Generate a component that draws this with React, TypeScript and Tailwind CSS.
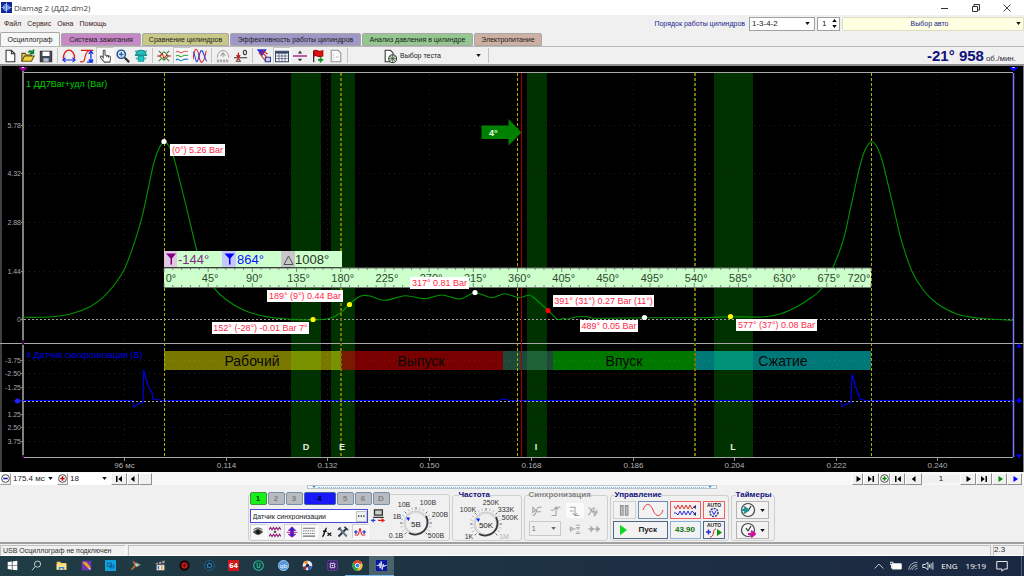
import type { ReactNode } from 'react';

type Pt = [number, number];

const pressureCurve: Pt[] = [
  [23, 317.3], [40, 317.3], [53, 316.8], [72, 313.5], [90, 306.7], [103, 297.3], [115, 284], [124.3, 269.3],
  [133, 246.7], [141.7, 218.3], [148.3, 188.3], [153.3, 165], [158.3, 150], [164, 141.7], [169.3, 146.7],
  [174, 158.3], [180, 181.7], [186.7, 208.3], [196.7, 250], [205, 273], [214.3, 288.3], [226.7, 300],
  [243.3, 310], [263.3, 316], [286.7, 319], [313, 320], [330, 318.3], [340, 313.3], [349.3, 304.3],
  [355, 299.5], [361.7, 295.7], [370, 296], [385, 300.3], [405, 295.7], [425, 298.7], [441.7, 295],
  [460, 299], [475, 292.7], [491.7, 297.7], [505, 293.7], [518.3, 297.7], [528.3, 295.3], [533.3, 297.3],
  [548.3, 310.7], [557.3, 319.3], [563.3, 318.3], [568.3, 319], [576.7, 316.7], [587, 316.7], [597, 318.3],
  [645, 317.7], [700, 317.7], [730, 316.7], [761.7, 317], [780, 314], [796.7, 306.7], [811.7, 297.3],
  [821.7, 288.3], [833.3, 266.7], [843.3, 240], [849.5, 213], [856, 183], [861, 162], [866, 148],
  [871.7, 141.7], [877, 147], [882, 160], [888, 184], [895, 214], [901.3, 240], [911.7, 270.7],
  [923.3, 290], [936.7, 303.3], [956.7, 314], [980, 318.3], [1013, 320.3],
];

const syncCurve =
  '23,400.5 133,400.5 134,407 136,405.5 139,403.5 143,402.5 143.7,370 147,382 149,388 152,393 153,399 163,400.5 498,400.5 503,399 510,400.5 841,400.5 842,406.5 845,404.5 851,402.5 852,374 855,385 858,393 860,399 866,400.5 1013,400.5';

function smooth(p: Pt[]) {
  let d = `M${p[0][0]} ${p[0][1]}`;
  for (let i = 0; i < p.length - 1; i++) {
    const a = p[Math.max(i - 1, 0)];
    const b = p[i];
    const c = p[i + 1];
    const e = p[Math.min(i + 2, p.length - 1)];
    d += `C${b[0] + (c[0] - a[0]) / 6} ${b[1] + (c[1] - a[1]) / 6} ${c[0] - (e[0] - b[0]) / 6} ${c[1] - (e[1] - b[1]) / 6} ${c[0]} ${c[1]}`;
  }
  return d;
}

const timeTicks: [number, string][] = [
  [124.5, '96 мс'], [226.5, '0.114'], [327.5, '0.132'], [429.5, '0.150'], [531.5, '0.168'],
  [633.5, '0.186'], [734.5, '0.204'], [836.5, '0.222'], [937.5, '0.240'],
];
const barTicks: [number, string][] = [[125.5, '5.78'], [173.5, '4.32'], [222.5, '2.88'], [271.5, '1.44'], [319.5, '0']];
const voltTicks: [number, string][] = [
  [360.5, '-3.75'], [373.5, '-2.50'], [387.5, '-1.25'], [414.5, '1.25'], [427.5, '2.50'], [441.5, '3.75'],
];
const bands: [number, number, string, number][] = [
  [291, 30, 'D', 306], [331, 24, 'E', 342], [527, 20, 'I', 536], [714, 39, 'L', 733],
];
const strokes: [number, number, string, string, number][] = [
  [164, 177, '#ffff00', 'Рабочий', 252], [341, 162, '#ff0000', 'Выпуск', 421], [503, 50, '#409878', '', 0],
  [553, 142, '#00ff00', 'Впуск', 624], [695, 176, '#00ffff', 'Сжатие', 783],
];
const callouts: [number, number, number, string][] = [
  [170, 144, 55, '(0°) 5.26 Bar'], [267, 290, 76, '189° (9°) 0.44 Bar'], [212, 322, 97, '152° (-28°) -0.01 Bar 7°'],
  [410, 277, 59, '317° 0.81 Bar'], [553, 295, 101, '391° (31°) 0.27 Bar (11°)'], [580, 320, 58, '489° 0.05 Bar'],
  [736, 319, 81, '577° (37°) 0.08 Bar'],
];
const markers: [number, number, string][] = [
  [164, 141.5, '#fff'], [313, 319.5, '#ff0'], [349.5, 304.5, '#ff0'], [475, 292.5, '#fff'],
  [548, 310.5, '#f00'], [644.5, 317.5, '#fff'], [730.5, 316.5, '#ff0'],
];

function Scope() {
  const deg = Array.from({ length: 81 }, (_, i) => i * 9);
  return (
    <svg viewBox="0 66 1024 406" className="block h-auto w-full bg-black" fontFamily="'Liberation Sans', Arial, sans-serif" role="img" aria-label="Осциллограмма">
      <path d="M1 66V472M1023.5 66V472" stroke="#808080" />
      {bands.map(([x, w]) => <rect key={x} x={x} y="73" width={w} height="384" fill="#003200" />)}
      <g stroke="#202010" strokeDasharray="1 4">
        {timeTicks.map(([x]) => <path key={x} d={`M${x} 74V457`} />)}
        {[...barTicks, ...voltTicks].map(([y]) => <path key={y} d={`M24 ${y}H1013`} />)}
      </g>
      <g stroke="#a0a0a0" strokeDasharray="2 2">
        <path d="M24 319.5H1013" />
      </g>
      <path d="M0 343.5H1023M23 72.5H1013M23 457.5H1013" stroke="#a8a8a8" />
      <path d="M23 70V457" stroke="#808080" strokeWidth="2" />
      <g stroke="#909090">
        {[...barTicks, ...voltTicks].map(([y]) => <path key={y} d={`M21 ${y}h2`} />)}
        {timeTicks.map(([x]) => <path key={x} d={`M${x} 458v3`} />)}
      </g>
      <g fill="#a8a8a8" fontSize="7" textAnchor="end">
        {[...barTicks, ...voltTicks].map(([y, t]) => <text key={y} x="21" y={y + 2}>{t}</text>)}
      </g>
      <g fill="#b0b0b0" fontSize="8" textAnchor="middle">
        {timeTicks.map(([x, t]) => <text key={x} x={x} y="468">{t}</text>)}
      </g>
      <path d={smooth(pressureCurve)} fill="none" stroke="#009400" strokeWidth="1.1" />
      <polyline points={syncCurve} fill="none" stroke="#0000e8" strokeWidth="1.2" />
      <path d="M24 401.5H1013" stroke="#a8a8c8" strokeDasharray="2 2" />
      {strokes.map(([x, w, fill]) => <rect key={x} x={x} y="351" width={w} height="19" fill={fill} opacity=".47" />)}
      <g fill="#080808" fontSize="14" textAnchor="middle">
        {strokes.map(([x, , , t, c]) => (t ? <text key={x} x={c} y="365.5">{t}</text> : null))}
      </g>
      <g stroke="#b0b000" strokeDasharray="3 2" fill="none">
        <path d="M164.5 73V457" />
        <path d="M517.5 73V457" />
        <path d="M871.5 73V457" />
        <path d="M341 73V457M695 73V457" stroke="#787800" strokeWidth="2" />
      </g>
      <path d="M521.5 73V457" stroke="#a80000" />
      <path d="M481.5 125.5h27v-6.5l13 13.500-13 13v-6.500h-27z" fill="#008000" />
      <text x="489" y="136" fill="#e8ffe8" fontSize="9" fontWeight="bold">4°</text>
      <text x="26" y="87" fill="#00d000" fontSize="9">1 ДД7Bar+удл (Bar)</text>
      <text x="26" y="358" fill="#0000e0" fontSize="9">4 Датчик синхронизации (В)</text>
      <g fill="#e0f0e0" fontSize="9" fontWeight="bold" textAnchor="middle">
        {bands.map(([, , t, x]) => <text key={t} x={x} y="450">{t}</text>)}
      </g>

      <rect x="164" y="251" width="178" height="16" fill="#ccffcc" />
      <rect x="164" y="251" width="13" height="16" fill="#e2c8e2" />
      <rect x="222" y="251" width="14" height="16" fill="#c4c8fa" />
      <rect x="281" y="251" width="14" height="16" fill="#c8c8c8" />
      <path d="M166 253.500h10l-4 5v6h-1.500v-6z" fill="#800080" />
      <path d="M224.500 253.500h10l-4 5v6h-1.500v-6z" fill="#0000ff" />
      <path d="M284 264.500h9l-4.500-8.500z" fill="none" stroke="#505050" />
      <g fontSize="13">
        <text x="178" y="263.500" fill="#803080">-144°</text>
        <text x="237" y="263.500" fill="#1010ff">864°</text>
        <text x="295" y="263.500" fill="#283028">1008°</text>
      </g>
      <rect x="164" y="268" width="707" height="19" fill="#ccffcc" />
      <path d="M164 268H871M164 287.500H871" stroke="#707870" />
      {deg.map((a) => {
        const x = 164 + (a * 707) / 720;
        const h = a % 45 === 0 ? 4 : 2;
        return <path key={a} d={`M${x} 268v${h}M${x} 287v${-h}`} stroke="#607060" strokeWidth=".8" />;
      })}
      <g fill="#304830" fontSize="11" textAnchor="middle">
        {deg.filter((a) => a % 45 === 0).map((a) => (
          <text key={a} x={a === 0 ? 171 : a === 720 ? 859 : 166 + (a * 707) / 720} y="282">{`${a}°`}</text>
        ))}
      </g>
      {callouts.map(([x, y, w, t]) => (
        <g key={t}>
          <rect x={x} y={y} width={w} height="12" fill="#fff" />
          <text x={x + w / 2} y={y + 9} fill="#ff2848" fontSize="9" textAnchor="middle">{t}</text>
        </g>
      ))}
      {markers.map(([x, y, f]) => <circle key={x} cx={x} cy={y} r="2.600" fill={f} />)}
      <path d="M18.500 67h9l-3.500 4h-2z" fill="#a000a0" />
      <path d="M23 340v5M23 455v3" stroke="#500050" strokeWidth="2" />
      <path d="M1013.500 73V457" stroke="#7878ff" strokeWidth="1.500" />
      <path d="M1009 67h9l-3.500 4h-2z" fill="#0000ff" />
      <path d="M1012.500 67.500h2M22 67.500h2" stroke="#fff" />
      <path d="M1016 347.500h6l-3-4zM1016 400.500l3-3 3 3-3 3zM1016 454.500h6l-3 4z" fill="#0000ff" />
      <circle cx="17.500" cy="401" r="2.500" fill="#2020ff" />
      <path d="M14 401H22" stroke="#2020ff" />
    </svg>
  );
}

function Ico({ children, size = 'w-[14px] h-[14px]' }: { children: ReactNode; size?: string }) {
  return (
    <svg viewBox="0 0 16 16" className={`${size} shrink-0`} fill="none" stroke="#303030" strokeWidth="1.2" aria-hidden="true">
      {children}
    </svg>
  );
}

function Caret() {
  return (
    <svg viewBox="0 0 6 4" className="h-[3px] w-[5px] shrink-0" aria-hidden="true"><path d="M0 0h6L3 4z" fill="#111" /></svg>
  );
}

function Pick({ label, value, box }: { label: string; value: string; box: string }) {
  return (
    <span className={`relative flex items-center ${box}`}>
      <select aria-label={label} defaultValue={value} className="h-full w-full appearance-none bg-transparent px-[2px] text-[8px] leading-none outline-none">
        <option>{value}</option>
      </select>
      <span className="pointer-events-none absolute right-[4px]"><Caret /></span>
    </span>
  );
}

const tabs = [
  ['Осциллограф', 'w-[60px] bg-[#f6f6f6] border-b-0'],
  ['Система зажигания', 'w-[80px] bg-[#c888c8]'],
  ['Сравнение цилиндров', 'w-[87px] bg-[#c8c888]'],
  ['Эффективность работы цилиндров', 'w-[131px] bg-[#9f98c6]'],
  ['Анализ давления в цилиндре', 'w-[111px] bg-[#94c890]'],
  ['Электропитание', 'w-[68px] bg-[#cdb0a2]'],
];

const tools: ({ name: string; on?: boolean; icon: ReactNode } | null)[] = [
  { name: 'Новый', icon: <path d="M3.500 1.500h6l4 4v9h-10zM9.500 1.500v4h4" fill="#fff" /> },
  { name: 'Открыть', icon: <><path d="M1 14V5h4l1 2h6v2" fill="#e8c860" stroke="#605010" /><path d="M1 14l3-6h11l-3 6z" fill="#f0d040" stroke="#605010" /><path d="M8 4c2-3 4-2 5 0M14.500 1v4.500h-4z" stroke="#108030" fill="#108030" /></> },
  { name: 'Сохранить', icon: <><path d="M1.500 2.500h13v12h-13z" fill="#404858" /><path d="M4 3h8v5H4z" fill="#fff" stroke="none" /><path d="M5 10.500h6v4H5z" fill="#b8c0d0" stroke="none" /></> },
  null,
  { name: 'Период', icon: <><path d="M1.500 11C2 -2 14 -2 14.500 11" stroke="#e01818" strokeWidth="1.500" /><path d="M1 12.500h14M4 10l-3 2.500 3 2.500M12 10l3 2.500-3 2.500" stroke="#1030e0" /></> },
  { name: 'Амплитуда', icon: <><path d="M0 14.500c6 1 5-3 6-6s1-7 7-7M1 1.500h14" stroke="#e01818" strokeWidth="1.300" /><path d="M12.500 3v12M10 5.500l2.500-3 2.500 3M10 12l2.500 3 2.500-3M8 15h7" stroke="#1030e0" strokeWidth="1.400" /></> },
  { name: 'Рука', on: true, icon: <path d="M6 10V2.500c0-1.300 2-1.300 2 0V7l5 1c1.500.3 1.500 1.500 1.300 3l-.8 4H7.500L3 10c-1-1.500.5-2.500 1.500-1.500zM10 7.500v2M12 8v2" fill="#fff" stroke="#505050" /> },
  { name: 'Лупа', icon: <><circle cx="6" cy="6" r="4.700" fill="#c8e4ff" stroke="#204888" strokeWidth="1.600" /><path d="M3.500 6h5M6 3.500v5" stroke="#204888" /><path d="M10 10l5 5" stroke="#303030" strokeWidth="2.500" /></> },
  { name: 'Маркеры', icon: <><path d="M1 2.500h14" stroke="#208888" /><path d="M2 6c3-6 9-6 12 0z" fill="#20c8c8" stroke="#108888" /><path d="M1 7.500h14M4 10h8" stroke="#108888" /><path d="M5 8v6h6V8z" fill="#20c8c8" stroke="#10a0a0" /><path d="M2 10l2 2M14 10l-2 2" stroke="#108888" /></> },
  null,
  { name: 'Автомасштаб', icon: <><path d="M3 8l5-5 5 5-5 5z" stroke="#18a018" /><path d="M0 8h4l2-3 2 6 3-4 1 1h4" stroke="#d02020" /><path d="M2 2l3 3M14 2l-3 3M2 14l3-3M14 14l-3-3" stroke="#506050" /></> },
  { name: 'Раздельно', on: true, icon: <><path d="M1 4c3-4 4 2 7 0s4-2 7-1" stroke="#d86060" /><path d="M1 8.500c3-4 4 2 7 0s4-2 7-1" stroke="#38a838" /><path d="M1 13c3-4 4 2 7 0s4-2 7-1" stroke="#2080d0" /></> },
  { name: 'Совместно', icon: <><path d="M0 12C2-4 5-2 7 9s6 6 8-7" stroke="#e02020" /><path d="M0 3c3 4 3 14 5 11s3-16 6-11 2 9 5 11" stroke="#2040e0" /></> },
  null,
  { name: 'Авто', icon: <><path d="M1.500 10C2-1 14-1 14.500 10M5 8l3-4 3 4M8 4v5" stroke="#a8a8a8" /><path d="M1 13.500h14" stroke="#a8a8a8" strokeWidth="3" strokeDasharray="2.500 1" /></> },
  { name: 'Ноль', icon: <><path d="M0 10h15M2 14h6" stroke="#303030" /><path d="M5 4v5M3 7l2 3 2-3M3 13l2-2 2 2" stroke="#c02020" strokeWidth="1.500" /><ellipse cx="12.500" cy="4" rx="1.800" ry="2.600" stroke="#303030" /></> },
  null,
  { name: 'Линейка', icon: <><path d="M1 1h9L6 7z" fill="#2030e0" stroke="#2030e0" /><path d="M2 4l8 10M5 3l6 6M6 1l6 5" stroke="#d02020" strokeWidth="1.200" /><path d="M9.500 9.500h6v5h-6z" fill="#c0c8ff" stroke="#303080" /></> },
  { name: 'Таблица', on: true, icon: <><path d="M.500 2.500h15v12H.500z" fill="#fff" stroke="#304060" /><path d="M1 4h14" stroke="#304060" strokeWidth="2.500" /><path d="M4.500 4v10M8 4v10M11.500 4v10M1 8h14M1 11h14" stroke="#506080" strokeWidth=".9" /></> },
  { name: 'Разделить', icon: <><path d="M0 8h16" stroke="#a02080" strokeWidth="1.600" /><path d="M5.500 5h5L8 2zM5.500 11h5L8 14z" fill="#303030" stroke="none" /></> },
  { name: 'Метка', icon: <><path d="M3 2v13" stroke="#303030" strokeWidth="1.500" /><path d="M3.500 2c3-2 4 2 10 0v6c-6 2-7-2-10 0z" fill="#e01010" stroke="#a00000" /><path d="M11 9.500v6M8 12.500h6" stroke="#109020" strokeWidth="2" /></> },
  { name: 'Отчёт', icon: <><path d="M2.500 1.500h8l3 3v10h-11z" fill="#fafafa" stroke="#909090" /><path d="M5 5v8M8 9h3" stroke="#b0b0b0" strokeDasharray="1 1" /></> },
  null,
];

function NavBtn({ name, d, w = 'w-[15px]', fill = '#000' }: { name: string; d: string; w?: string; fill?: string }) {
  return (
    <button aria-label={name} className={`flex h-[12px] items-center justify-center border border-[#fff] border-r-[#909090] border-b-[#909090] bg-[#f0f0f0] ${w}`}>
      <svg viewBox="0 0 10 8" className="h-[6px] w-[8px]" fill={fill} aria-hidden="true"><path d={d} /></svg>
    </button>
  );
}

function Zoomer({ name, color, plus }: { name: string; color: string; plus?: boolean }) {
  return (
    <button aria-label={name} className="flex h-[12px] w-[11px] items-center justify-center border border-white border-r-[#a0a0a0] border-b-[#a0a0a0] bg-[#f0f0f0]">
      <svg viewBox="0 0 10 10" className="h-[9px] w-[9px] shrink-0" fill="#fff" stroke="#404040" aria-hidden="true">
        <circle cx="5" cy="5" r="4.300" /><path d={plus ? 'M2.500 5h5M5 2.500v5' : 'M2.500 5h5'} stroke={color} strokeWidth="1.800" />
      </svg>
    </button>
  );
}

const FIRST = 'M1 0h2v8H1zM9 0v8L4 4z';
const BACK = 'M7 0v8L2 4z';
const FWD = 'M3 0v8l6-4z';
const LAST = 'M1 0v8l5-4zM7 0h2v8H7z';

function Dial({ value, labels, cx }: { value: string; labels: [number, number, string, string?][]; cx: number }) {
  const ticks = Array.from({ length: 19 }, (_, i) => ((135 + i * 15) * Math.PI) / 180);
  return (
    <svg viewBox="0 0 64 42" className="h-[42px] w-[64px] shrink-0" fontFamily="'Liberation Sans', Arial, sans-serif" role="img" aria-label={value}>
      <g stroke="#a0a0a0" strokeWidth=".8">
        {ticks.map((a, i) => (
          <path key={i} stroke={i % 3 === 0 ? '#404040' : '#b0b0b0'} d={`M${cx + 13.500 * Math.cos(a)} ${25 + 13.500 * Math.sin(a)}L${cx + 16 * Math.cos(a)} ${25 + 16 * Math.sin(a)}`} />
        ))}
      </g>
      <circle cx={cx} cy="25" r="12" fill="#d8d8d8" stroke="#c4c4c4" strokeDasharray="2 1" />
      <path d={`M${cx - 7} 35A12.500 12.500 0 0 0 ${cx + 10} 18`} fill="none" stroke="#383838" strokeWidth="1.800" />
      <circle cx={cx} cy="25" r="10" fill="#f0f0f0" />
      <path d={`M${cx - 10} 19.500h4l-1.500 3.500z`} fill="#0020ff" />
      <text x={cx} y="28.500" fontSize="8" textAnchor="middle" fill="#202020">{value}</text>
      {labels.map(([x, y, t, c]) => <text key={t} x={x} y={y} fontSize="7" textAnchor="middle" fill={c ?? '#303030'}>{t}</text>)}
    </svg>
  );
}

const channels: [string, string][] = [
  ['1', 'w-[17px] bg-[#18f018] text-[#084808] border-[#409040]'], ['2', 'w-[17px] bg-[#b8bcc0] text-[#808080] border-[#7890a8]'],
  ['3', 'w-[17px] bg-[#b8bcc0] text-[#808080] border-[#7890a8]'], ['4', 'w-[32px] bg-[#1818f8] text-[#000030] border-[#4060a0]'],
  ['5', 'w-[17px] bg-[#b8bcc0] text-[#808080] border-[#7890a8]'], ['6', 'w-[17px] bg-[#b8bcc0] text-[#808080] border-[#7890a8]'],
  ['D', 'w-[17px] bg-[#b8bcc0] text-[#808080] border-[#7890a8]'],
];

const channelTools: { name: string; on?: boolean; icon: ReactNode }[] = [
  { name: 'Видимость', on: true, icon: <><path d="M2 8c3-4 9-4 12 0-3 4-9 4-12 0z" fill="#606060" /><circle cx="8" cy="8" r="2.800" fill="#101010" /><path d="M2 5c4-3 8-3 12 0" /></> },
  { name: 'Фильтр', icon: <><path d="M0 5l2-3 2 3 2-3 2 3 2-3 2 3 2-3 2 3M0 14l2-3 2 3 2-3 2 3 2-3 2 3 2-3 2 3" stroke="#901878" strokeWidth="1.500" /><path d="M6 7h4l-2 3z" fill="#202020" stroke="none" /></> },
  { name: 'Инверсия', on: true, icon: <><path d="M8 1l5 5h-3v5h3l-5 4-5-4h3V6H3z" fill="#2020e8" stroke="#a02090" /><path d="M1 8.500h14" stroke="#a02090" /></> },
  { name: 'Уровни', on: true, icon: <><path d="M0 3h16M0 13.500h16" stroke="#707070" strokeWidth="1.500" /><path d="M0 6.500h16M0 10h16" stroke="#707070" strokeDasharray="2 1" /></> },
  { name: 'Функция', icon: <><path d="M3 14c3 0 3-11 6-11M4 7h5" strokeWidth="2" stroke="#101010" /><path d="M10 9l5 4M15 9l-5 4" strokeWidth="1.500" stroke="#101010" /></> },
  { name: 'Настройка', icon: <><path d="M2 14L13 3" stroke="#303840" strokeWidth="2.500" /><path d="M3 3l10 11" stroke="#607890" strokeWidth="2.500" /><path d="M10 1c2 3 3 4 5 4M1 5l4-3" stroke="#303840" strokeWidth="2" /></> },
  { name: 'Интерполяция', on: true, icon: <><path d="M1 12h4c2 0 2-9 3-9s1 9 3 9h4" stroke="#e02020" strokeWidth="1.500" /><path d="M0 8h5M2.500 5.500v5M11 8h5M13.500 5.500v5" stroke="#2020d0" strokeWidth="1.500" /></> },
];

function Group({ title, tone, box, children }: { title: string; tone: string; box: string; children: ReactNode }) {
  return (
    <fieldset className={`h-[50px] min-w-0 shrink-0 rounded-[3px] border border-[#cfcfcf] ${box}`}>
      <legend className={`ml-[4px] h-[8px] whitespace-nowrap text-[8px] leading-[8px] font-bold ${tone}`}>{title}</legend>
      {children}
    </fieldset>
  );
}

const ctl = 'flex h-[18px] shrink-0 items-center justify-center border bg-[#f2f2f2]';

const taskIcons: { name: string; icon: ReactNode; state?: string }[] = [
  { name: 'Пуск', icon: <path d="M1 3l6-1v5.500H1zM8 2l7-1v6.500H8zM1 8.500h6V14l-6-1zM8 8.500h7V15l-7-1z" fill="#fff" stroke="none" /> },
  { name: 'Поиск', icon: <><circle cx="9.500" cy="6" r="4.500" stroke="#e0e8e8" /><path d="M6 9.500L1.500 15" stroke="#e0e8e8" /></> },
  { name: 'Проводник', icon: <><path d="M1 2.500h5l1.500 2H15V14H1z" fill="#f8d060" stroke="none" /><path d="M1 6h14v8H1z" fill="#ffe08a" stroke="none" /><path d="M4 14v-4h8v4h-2v-2H6v2z" fill="#3088d8" stroke="none" /></> },
  { name: 'Заметки', icon: <><path d="M1 1h14v14H1z" fill="#6838b0" stroke="none" /><path d="M3 3l9 9M6 3l7 8" stroke="#f0a030" strokeWidth="2.500" /><path d="M11 13l3 1-1-3z" fill="#fff" stroke="none" /></> },
  { name: 'Связь', icon: <><path d="M0 0h16v16H0z" fill="#10a0e0" stroke="none" /><path d="M3.500 4.500h6v5h-6zM7.500 7.500h5v4h-5z" stroke="#085880" /></> },
  { name: 'Краски', icon: <><path d="M4 2l11 5-6 3z" fill="#d8d8d0" stroke="#808078" /><path d="M8 8l-6 6" stroke="#b06828" strokeWidth="3" /><path d="M6 3l3 2" stroke="#e03030" strokeWidth="2" /><path d="M10 5l2 1" stroke="#30c040" strokeWidth="2" /></> },
  { name: 'Медиа', icon: <><path d="M1 5l13-4v3L2 7zM2 7h12v8H2z" fill="#f0f0e8" stroke="#606060" /><path d="M4 4l2 2M9 3l2 2" stroke="#202020" strokeWidth="1.500" /><path d="M5 9v4" stroke="#2060d0" strokeWidth="2" /><path d="M10 9v4" stroke="#e08020" strokeWidth="2" /></> },
  { name: 'Диагностика', icon: <><circle cx="8" cy="8" r="7.500" fill="#180808" stroke="none" /><circle cx="8" cy="8" r="4" fill="#c01818" stroke="#e02020" /><path d="M5.500 8h5M8 5.500v5" stroke="#300" /></> },
  { name: 'Сканер', icon: <><circle cx="8" cy="8" r="7" fill="#102838" stroke="#2878a8" /><circle cx="8" cy="8" r="3.200" stroke="#40a8e0" strokeWidth="2" strokeDasharray="2 1" /></> },
  { name: 'AIDA', icon: <><path d="M0 0h16v16H0z" fill="#d01818" stroke="none" /><text x="8" y="12" fontSize="11" fontWeight="bold" textAnchor="middle" fill="#fff" stroke="none">64</text></> },
  { name: 'Удаление', icon: <><circle cx="8" cy="8" r="7" stroke="#20c890" strokeWidth="1.500" /><path d="M6 4v5c0 3 4 3 4 0V4" stroke="#20c890" strokeWidth="1.500" /></> },
  { name: 'Торрент', icon: <><circle cx="8" cy="8" r="7.500" fill="#5898e0" stroke="#a0c8f0" /><text x="8" y="11" fontSize="9" textAnchor="middle" fill="#fff" stroke="none">qb</text></> },
  { name: 'Диск', icon: <><circle cx="8" cy="8" r="7" fill="#e8e8f0" stroke="none" /><path d="M8 8L2 3a7 7 0 0 1 6-2z" fill="#f09030" stroke="none" /><path d="M8 8l7 1a7 7 0 0 1-6 6z" fill="#4060c0" stroke="none" /><path d="M8 8L1 10a7 7 0 0 0 4 5z" fill="#903040" stroke="none" /><circle cx="8" cy="8" r="2.500" fill="#203040" stroke="none" /></> },
  { name: 'Процессор', icon: <><rect x="1" y="1" width="14" height="14" rx="2" fill="#382068" stroke="#6848a8" /><path d="M5 5h6v6H5z" stroke="#e8e0ff" /><path d="M7 7h2v2H7z" fill="#fff" stroke="none" /><path d="M3 6h2M3 10h2M11 6h2M11 10h2M6 3v2M10 3v2M6 11v2M10 11v2" stroke="#b098e0" /></> },
  { name: 'Chrome', state: 'border-b-[#78b8e8]', icon: <><circle cx="8" cy="8" r="7.500" fill="#f0c030" stroke="none" /><path d="M8 8L1.500 4.200A7.500 7.500 0 0 1 14.500 4.300z" fill="#e04030" stroke="none" /><path d="M8 8l-6.500-3.800A7.500 7.500 0 0 0 7.500 15.500l3-6z" fill="#28a050" stroke="none" /><circle cx="8" cy="8" r="3.300" fill="#3880f0" stroke="#fff" /></> },
  { name: 'Diamag', state: 'bg-[#4a626c] border-b-[#78b8e8]', icon: <><path d="M0 0h16v16H0z" fill="#0818a0" stroke="none" /><path d="M1 8h3l1-3 1 7 1.500-10 1.500 12 1.500-8 1 4 1-2h3" stroke="#fff" /></> },
];

export default function App() {
  return (
    <div className="flex min-h-screen flex-col bg-[#f0f0f0] font-['Liberation_Sans',Arial,sans-serif] text-[7px] leading-none text-[#202020]">
      <header className="flex h-[15px] items-center bg-white pl-[1px]">
        <Ico size="w-[11px] h-[11px]"><path d="M0 0h16v16H0z" fill="#102898" stroke="none" /><path d="M1 8h2M4 5v6M6 3v10M8 1v14M10 4v8M12 6v4M13 8h2" stroke="#a8c8ff" strokeWidth="1.500" /></Ico>
        <h1 className="ml-[2px] font-['Open_Sans','Noto_Sans',sans-serif] text-[8px] text-[#404040]">Diamag 2 (ДД2.dm2)</h1>
        <div className="ml-auto flex items-center gap-[17px] pr-[10px]">
          <button aria-label="Свернуть" className="flex h-[13px] w-[14px] items-center justify-center"><svg viewBox="0 0 8 8" className="h-[8px] w-[8px]"><path d="M0 4.500h7" stroke="#303030" /></svg></button>
          <button aria-label="Развернуть" className="flex h-[13px] w-[14px] items-center justify-center"><svg viewBox="0 0 8 8" className="h-[8px] w-[8px]" fill="none" stroke="#303030"><path d="M.500 2.500h5v5h-5zM2 2V.500h5.500V6H6" /></svg></button>
          <button aria-label="Закрыть" className="flex h-[13px] w-[14px] items-center justify-center"><svg viewBox="0 0 8 8" className="h-[8px] w-[8px]"><path d="M.500.500l7 7M7.500.500l-7 7" stroke="#303030" strokeWidth=".9" /></svg></button>
        </div>
      </header>

      <div className="flex h-[17px] items-center pl-[4px]">
        <nav className="flex gap-[6px] text-[#401818]">
          <button>Файл</button><button>Сервис</button><button>Окна</button><button>Помощь</button>
        </nav>
        <label className="ml-auto mr-[4px] text-[#1c1c90]" htmlFor="order">Порядок работы цилиндров</label>
        <span className="relative flex h-[14px] w-[66px] items-center border border-[#a0a0a0] bg-white">
          <select id="order" defaultValue="1-3-4-2" className="h-full w-full appearance-none bg-transparent px-[2px] text-[8px] leading-none outline-none"><option>1-3-4-2</option></select>
          <span className="pointer-events-none absolute right-[4px]"><Caret /></span>
        </span>
        <span className="ml-[2px] flex h-[14px] w-[23px] items-center border border-[#a0a0a0] bg-white">
          <input aria-label="Номер цилиндра" defaultValue="1" className="h-full w-[12px] bg-transparent pl-[4px] text-[8px] leading-none outline-none" />
          <span className="flex flex-1 flex-col items-center gap-[3px]">
            <button aria-label="Больше"><svg viewBox="0 0 6 4" className="block h-[3px] w-[5px]"><path d="M0 4h6L3 0z" /></svg></button>
            <button aria-label="Меньше"><svg viewBox="0 0 6 4" className="block h-[3px] w-[5px]"><path d="M0 0h6L3 4z" /></svg></button>
          </span>
        </span>
        <button className="ml-[2px] flex h-[14px] w-[182px] items-center rounded-[2px] border border-[#dcdcc0] bg-[#ffffe1] pr-[2px] text-[#1c1c90]">
          <span className="flex-1 text-center">Выбор авто</span><Caret />
        </button>
      </div>

      <div role="tablist" className="flex h-[14px] items-end gap-[1px]">
        {tabs.map(([t, c], i) => (
          <button key={t} role="tab" aria-selected={i === 0} className={`rounded-t-[2px] border border-[#a8a8a8] whitespace-nowrap ${i === 0 ? 'h-[14px]' : 'h-[13px]'} ${c}`}>{t}</button>
        ))}
      </div>

      <div className="flex h-[20px] items-center border-t border-b-2 border-t-[#b8b8b8] border-b-[#909090] pl-px">
        {tools.map((t, i) =>
          t ? (
            <button key={i} aria-label={t.name} className={`flex h-[17px] w-[18px] items-center justify-center ${t.on ? 'border border-[#c8c8c8] border-r-white border-b-white bg-[#f8f8f8]' : ''}`}>
              <Ico>{t.icon}</Ico>
            </button>
          ) : (
            <span key={i} className="mx-[2px] h-[15px] w-px bg-[#c4c4c4]" />
          ),
        )}
        <button className="ml-[33px] flex h-[17px] w-[103px] items-center gap-[3px] pr-[5px]">
          <Ico><path d="M2.500 1.500h6l3 3v10h-9z" fill="#fff" /><circle cx="11" cy="11" r="4.500" fill="#d8e8d8" stroke="#304830" /><path d="M6.500 11h9M11 6.500v9M8 8l6 6M14 8l-6 6" stroke="#304830" strokeWidth=".8" /></Ico>
          <span className="flex-1 text-left">Выбор теста</span><Caret />
        </button>
        <span className="ml-[2px] h-[15px] w-px bg-[#c4c4c4]" />
        <p className="ml-auto flex items-baseline gap-[2px] pr-[8px] text-[#10107c]">
          <strong className="text-[15px]">-21° 958</strong><span className="text-[8px] text-[#303040]">об./мин.</span>
        </p>
      </div>

      <Scope />

      <div className="flex h-[13px] items-center bg-[#f7f7f7] pr-[2px]">
        <Zoomer name="Уменьшить" color="#2020c0" />
        <Pick label="Развёртка" value="175.4 мс" box="h-[12px] w-[46px] bg-white" />
        <Zoomer name="Увеличить" color="#c01010" plus />
        <Pick label="Делений" value="18" box="h-[12px] w-[43px] bg-white" />
        <NavBtn name="В начало" d={FIRST} w="w-[16px]" /><NavBtn name="Назад" d={BACK} w="w-[12px]" /><NavBtn name="Ползунок" d="" w="w-[13px]" />
        <span className="flex-1" />
        <NavBtn name="Вправо" d={FWD} w="w-[11px]" /><NavBtn name="В конец" d={LAST} w="w-[16px]" />
        <Zoomer name="Добавить" color="#109010" plus />
        <NavBtn name="Первый кадр" d={FIRST} /><NavBtn name="Предыдущий кадр" d={BACK} w="w-[17px]" />
        <span className="w-[38px] bg-[#f0f0f0] text-center text-[8px]">1</span>
        <NavBtn name="Следующий кадр" d={FWD} w="w-[16px]" /><NavBtn name="Последний кадр" d={LAST} w="w-[16px]" />
        <NavBtn name="Воспроизвести" d={FWD} w="w-[15px]" fill="#088808" /><NavBtn name="Вперёд" d={FWD} w="w-[15px]" fill="#0000ff" />
      </div>

      <div className="mx-auto flex h-[4px] w-[410px] items-center justify-between border border-[#b8c4cc] bg-[#f4f8fa] px-[4px]">
        <svg viewBox="0 0 6 4" className="h-[2px] w-[4px]"><path d="M0 0h6L3 4z" fill="#1080d0" /></svg>
        <span className="mx-[2px] h-0 flex-1 border-t border-dotted border-[#88bce0]" />
        <svg viewBox="0 0 6 4" className="h-[2px] w-[4px]"><path d="M0 0h6L3 4z" fill="#1080d0" /></svg>
      </div>

      <main className="flex justify-center gap-[2px] border-b-2 border-[#a0a0a0] pt-[2px] pr-[2px] pb-px">
        <section aria-label="Канал" className="mt-[3px] flex h-[47px] w-[202px] shrink-0 rounded-[3px] border border-[#cfcfcf] pl-px">
          <div className="-mt-[3px] flex w-[136px] flex-col">
            <div className="flex gap-px">
              {channels.map(([t, c]) => <button key={t} className={`h-[13px] shrink-0 rounded-[2px] border text-[8px] leading-none font-bold ${c}`}>{t}</button>)}
            </div>
            <div className="mt-[4px] flex items-center gap-[3px]">
              <span className="flex h-[14px] w-[118px] items-center border border-[#4848e0] bg-white">
                <input aria-label="Имя канала" defaultValue="Датчик синхронизации" className="h-full min-w-0 flex-1 bg-transparent pl-[2px] text-[7px] leading-none outline-none" />
                <button aria-label="Выбрать датчик" className="flex h-[11px] w-[11px] items-center justify-center border border-[#c0c0c0] bg-[#f0f0f0]"><svg viewBox="0 0 8 2" className="h-[2px] w-[7px]"><path d="M0 0h1.500v2H0zM3 0h1.500v2H3zM6 0h1.500v2H6z" fill="#505050" /></svg></button>
              </span>
              <button aria-label="Подключение"><Ico><path d="M4 1h9v6H4zM2.500 9.500h12" fill="#c8d0c8" strokeWidth="1.500" /><path d="M0 13h5M2.500 11v4" stroke="#2040e0" strokeWidth="1.500" /><path d="M8 13h7M12 11l3 2-3 2" stroke="#e02020" /></Ico></button>
            </div>
            <div className="mt-px flex">
              {channelTools.map((t) => (
                <button key={t.name} aria-label={t.name} className={`flex h-[15px] w-[17px] shrink-0 items-center justify-center ${t.on ? 'border border-[#d0d0d0] border-r-white border-b-white bg-[#f8f8f8]' : ''}`}><Ico size="w-[12px] h-[12px]">{t.icon}</Ico></button>
              ))}
            </div>
          </div>
          <div className="mt-[3px]">
            <Dial value="5В" cx={30} labels={[[18, 9, '10В'], [42, 7, '100В'], [11, 21, '1В'], [54, 19, '200В'], [10, 40, '0.1В'], [50, 40, '500В']]} />
          </div>
        </section>

        <Group title="Частота" tone="text-[#10107c]" box="w-[70px] pl-[2px]">
          <Dial value="50K" cx={31} labels={[[13, 13, '100K'], [36, 6, '250K'], [51, 13, '333K'], [55, 21, '500K'], [14, 40, '1K'], [49, 40, '1M', '#b0b0b0']]} />
        </Group>

        <Group title="Синхронизация" tone="text-[#808080]" box="w-[84px]">
          <div className="flex flex-col gap-[3px] px-[4px] pt-[4px]">
            <div className="flex justify-between">
              {['M1 14c6 0 4-11 8-11h4M5 9h7M1 3v7l4-3z', 'M2 14h6V3h6M5 6l3-3 3 3M1 7h4', 'M1 3h7v11h6M5 11l3 3 3-3M1 8h5', 'M1 13c5 0 4-9 7-9M10 3l-2 6h4l-3 6M2 3l10 11M13 6v6'].map((d, i) => (
                <button key={d} disabled aria-label={`Режим ${i + 1}`} className={`flex h-[15px] w-[18px] items-center justify-center ${i === 2 ? 'bg-[#fafafa]' : ''}`}><Ico size="w-[12px] h-[12px]"><path d={d} stroke="#a4a4a4" strokeWidth="1.400" /></Ico></button>
              ))}
            </div>
            <div className="flex items-center justify-between">
              <Pick label="Канал синхронизации" value="1" box="h-[15px] w-[32px] border border-[#b0b0b0] opacity-60" />
              <button disabled aria-label="Уровень" className="ml-[4px] flex h-[14px] w-[18px] items-center justify-center"><Ico size="w-[12px] h-[12px]"><path d="M0 8h9M9 3h6M9 14h6M2 5v6l4-3zM10 6h4l-2 3zM10 12h4" stroke="#a4a4a4" /></Ico></button>
              <button disabled aria-label="Сдвиг" className="flex h-[14px] w-[18px] items-center justify-center"><Ico size="w-[12px] h-[12px]"><path d="M0 8h16M4 5l3 3-3 3zM12 5l3 3-3 3z" fill="#a4a4a4" stroke="#a4a4a4" strokeWidth="1.400" /></Ico></button>
            </div>
          </div>
        </Group>

        <Group title="Управление" tone="text-[#10107c]" box="w-[119px]">
          <div className="flex flex-col gap-[2px] px-[2px] pt-[2px]">
            <div className="flex gap-[2px]">
              <button aria-label="Пауза" className={`${ctl} w-[23px] border-[#d0d0d0]`}><Ico><path d="M4 3h3v11H4zM9.500 3h3v11h-3z" fill="#c0c0c0" stroke="#909090" /></Ico></button>
              <button aria-label="Синус" className={`${ctl} w-[30px] border-[#708cb0]`}><svg viewBox="0 0 24 14" className="h-[14px] w-[24px]" fill="none" stroke="#e03030"><path d="M2 7C5-1 9 0 12 7s7 8 10 0" /></svg></button>
              <button aria-label="Сигналы" className={`${ctl} w-[31px] border-[#f06060]`}><svg viewBox="0 0 26 14" className="h-[14px] w-[26px]" fill="none"><path d="M2 3l2 3 2-4 2 4 2-4 2 4 2-4 2 4 2-4 2 4 3-3" stroke="#e03030" /><path d="M2 10h2l2 2 2-4 2 4 2-4 2 4 2-4 2 4 2-4 3 3" stroke="#3030e0" /><path d="M24 2v4l-3-2zM24 9v4l-3-2z" fill="#303080" /></svg></button>
              <button aria-label="Авто вольт" className={`${ctl} w-[22px] border-[#f06060]`}><svg viewBox="0 0 18 16" className="h-[16px] w-[18px]"><text x="9" y="5" fontSize="5" fontWeight="bold" textAnchor="middle" fill="#222">AUTO</text><circle cx="9" cy="10.500" r="4" fill="#e8ecff" stroke="#404080" strokeWidth="1.500" strokeDasharray="2 1" /><path d="M7 9l2 3.500L11 9" fill="none" stroke="#2030d0" /></svg></button>
            </div>
            <div className="flex gap-[2px]">
              <button className={`${ctl} w-[55px] justify-start gap-[12px] border-[#506880] pl-[6px] text-[8px] font-bold`}><svg viewBox="0 0 8 12" className="h-[12px] w-[7px]"><path d="M0 0v12l8-6z" fill="#10d820" /></svg>Пуск</button>
              <button className={`${ctl} w-[31px] border-[#88b0d8] bg-[#e4ecf4] text-[8px] font-bold text-[#107010]`}>43.90</button>
              <button aria-label="Авто запуск" className={`${ctl} w-[22px] border-[#506880]`}><svg viewBox="0 0 18 16" className="h-[16px] w-[18px]" fill="none"><text x="9" y="5" fontSize="5" fontWeight="bold" textAnchor="middle" fill="#222">AUTO</text><path d="M1 10h5M3.500 7.500v5" stroke="#2030d0" strokeWidth="1.500" /><path d="M5 15c5 0 2-8 6-8" stroke="#d02020" /><path d="M12 7v7l5-3.500z" fill="#109010" /></svg></button>
            </div>
          </div>
        </Group>

        <Group title="Таймеры" tone="text-[#10107c]" box="w-[44px]">
          <div className="flex flex-col gap-[2px] px-[4px] pt-[2px]">
            {['M1 8h5M4 5l4 3-4 3', 'M8 12h5M11 9l4 3-4 3'].map((d, i) => (
              <button key={d} aria-label={`Таймер ${i + 1}`} className={`${ctl} w-[33px] gap-[4px] border-[#b4b4b4]`}>
                <Ico size="w-[16px] h-[16px]"><circle cx="8" cy="8" r="6.500" fill="#f8f8f8" stroke="#404040" /><path d="M8 9l3-5M8 9L6 6" /><path d={d} stroke={i ? '#d010a0' : '#209090'} strokeWidth="2.200" /></Ico><Caret />
              </button>
            ))}
          </div>
        </Group>
      </main>

      <footer className="flex h-[12px] items-center gap-[2px] text-[#303030]">
        <span className="flex h-[11px] w-[126px] items-center border border-[#c0c0c0] border-r-white border-b-white pl-[2px] whitespace-nowrap">USB Осциллограф не подключен</span>
        <span className="h-[11px] flex-1 border border-[#c0c0c0] border-b-white" />
        <span className="flex h-[11px] w-[31px] items-center border border-[#c0c0c0] border-b-white text-[8px]">2.3</span>
      </footer>

      <div className="mt-auto flex h-[20px] items-stretch bg-linear-to-r from-[#203c44] to-[#1b2842] font-['Open_Sans','Noto_Sans',sans-serif] text-[8px] text-white">
        <div className="grid w-[394px] grid-cols-16">
          {taskIcons.map((t) => (
            <button key={t.name} aria-label={t.name} className={`flex items-center justify-center border-b ${t.state ?? 'border-b-transparent'}`}><Ico size="w-[11px] h-[11px]">{t.icon}</Ico></button>
          ))}
        </div>
        <div className="ml-auto flex items-center">
          <Ico size="w-[10px] h-[10px]"><path d="M1 12l7-7 7 7" stroke="#fff" /></Ico>
          <span className="w-[6px]" />
          <Ico size="w-[12px] h-[12px]"><path d="M3 5h12v7H3z" fill="#fff" stroke="#fff" /><path d="M0 3h4v3H0zM2 6v5" stroke="#fff" /></Ico>
          <span className="w-[6px]" />
          <Ico size="w-[10px] h-[10px]"><path d="M1 14A13 13 0 0 1 15 2M4 14A10 10 0 0 1 15 6M7 14a7 7 0 0 1 8-5M11 14a4 4 0 0 1 4-2" stroke="#d0d8e0" /></Ico>
          <span className="w-[4px]" />
          <Ico size="w-[12px] h-[12px]"><path d="M1 6h3l4-3v10l-4-3H1zM10 6v4M12 4.500v7M14.500 3v10" stroke="#e8f0f0" /></Ico>
          <span className="ml-[7px]">ENG</span><span className="ml-[8px]">19:19</span>
          <button aria-label="Уведомления" className="mr-[13px] ml-[10px]"><Ico size="w-[12px] h-[12px]"><path d="M1 2h14v10h-4l-3 3v-3H1z" stroke="#fff" /></Ico></button>
          <span className="mr-[2px] h-full w-px bg-[#506070]" />
        </div>
      </div>
    </div>
  );
}
